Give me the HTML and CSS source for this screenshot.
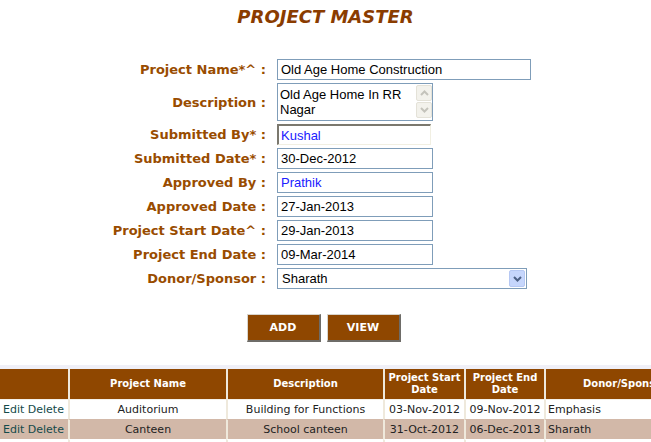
FILE: index.html
```html
<!DOCTYPE html>
<html>
<head>
<meta charset="utf-8">
<title>Project Master</title>
<link rel="stylesheet" href="styles.css">
</head>
<body>
<h1 class="title">PROJECT MASTER</h1>
<div class="form">
  <label class="lbl">Project Name*^ :</label>
  <input class="inp inp-wide" value="Old Age Home Construction">

  <label class="lbl">Description :</label>
  <div class="ta">
    <textarea class="ta-text">Old Age Home In RR Nagar</textarea>
    <div class="sb">
      <div class="sb-btn"><svg width="9" height="6" viewBox="0 0 9 6"><path d="M1 5 L4.5 1.5 L8 5" fill="none" stroke="#c4c3bb" stroke-width="2"/></svg></div>
      <div class="sb-btn"><svg width="9" height="6" viewBox="0 0 9 6"><path d="M1 1 L4.5 4.5 L8 1" fill="none" stroke="#c4c3bb" stroke-width="2"/></svg></div>
    </div>
  </div>

  <label class="lbl">Submitted By* :</label>
  <input class="inp inp-ro blue" value="Kushal" readonly>

  <label class="lbl">Submitted Date* :</label>
  <input class="inp" value="30-Dec-2012">

  <label class="lbl">Approved By :</label>
  <input class="inp blue" value="Prathik">

  <label class="lbl">Approved Date :</label>
  <input class="inp" value="27-Jan-2013">

  <label class="lbl">Project Start Date^ :</label>
  <input class="inp" value="29-Jan-2013">

  <label class="lbl">Project End Date :</label>
  <input class="inp" value="09-Mar-2014">

  <label class="lbl">Donor/Sponsor :</label>
  <div class="sel">
    <span class="sel-text">Sharath</span>
    <span class="sel-btn"><svg width="9" height="6" viewBox="0 0 9 6"><path d="M1 1 L4.5 4.5 L8 1" fill="none" stroke="#4d6185" stroke-width="2"/></svg></span>
  </div>
</div>

<div class="actions">
  <button class="btn">ADD</button>
  <button class="btn">VIEW</button>
</div>

<div class="grid-wrap">
  <table class="grid">
    <colgroup>
      <col class="c1"><col class="c2"><col class="c3"><col class="c4"><col class="c5"><col class="c6"><col class="c7">
    </colgroup>
    <thead>
      <tr>
        <th></th>
        <th>Project Name</th>
        <th>Description</th>
        <th>Project Start Date</th>
        <th>Project End Date</th>
        <th>Donor/Sponsor</th>
        <th>Status</th>
      </tr>
    </thead>
    <tbody>
      <tr>
        <td class="links">Edit Delete</td>
        <td class="ctr">Auditorium</td>
        <td class="ctr">Building for Functions</td>
        <td class="ctr">03-Nov-2012</td>
        <td class="ctr">09-Nov-2012</td>
        <td>Emphasis</td>
        <td></td>
      </tr>
      <tr class="alt">
        <td class="links">Edit Delete</td>
        <td class="ctr">Canteen</td>
        <td class="ctr">School canteen</td>
        <td class="ctr">31-Oct-2012</td>
        <td class="ctr">06-Dec-2013</td>
        <td>Sharath</td>
        <td></td>
      </tr>
      <tr>
        <td>&nbsp;</td><td></td><td></td><td></td><td></td><td></td><td></td>
      </tr>
    </tbody>
  </table>
</div>
</body>
</html>
```

FILE: styles.css
```css
html, body {
  margin: 0;
  padding: 0;
  background: #ffffff;
  overflow: hidden;
}

body {
  font-family: "DejaVu Sans", Verdana, sans-serif;
}

.title {
  margin: 6px 0 0;
  text-align: center;
  font-size: 18px;
  line-height: 22px;
  font-style: italic;
  font-weight: bold;
  color: #8a3c00;
}

.form {
  display: grid;
  grid-template-columns: 266px auto;
  column-gap: 11px;
  row-gap: 3px;
  margin-top: 31px;
  align-items: center;
  justify-items: start;
}

.lbl {
  justify-self: end;
  font-size: 13px;
  font-weight: bold;
  color: #994c00;
  white-space: nowrap;
}

.inp {
  box-sizing: border-box;
  width: 156px;
  height: 21px;
  margin: 0;
  padding: 0 3px;
  border: 1px solid #7f9db9;
  background: #fff;
  font: 13px "Liberation Sans", Arial, sans-serif;
  color: #000;
  outline: none;
}

.inp-wide {
  width: 254px;
}

.inp-ro {
  width: 154px;
  border-style: solid;
  border-width: 2px 1px 1px 2px;
  border-color: #7b786e #f1efe2 #f1efe2 #7b786e;
  padding-left: 2px;
}

.blue {
  color: #2020ff;
}

.ta {
  box-sizing: border-box;
  display: flex;
  width: 156px;
  height: 38px;
  border: 1px solid #7f9db9;
  background: #fff;
}

.ta-text {
  flex: 1;
  min-width: 0;
  margin: 0;
  border: 0;
  padding: 3px 2px 0;
  resize: none;
  overflow: hidden;
  font: 13px/15px "Liberation Sans", Arial, sans-serif;
  color: #000;
  outline: none;
}

.sb {
  display: flex;
  flex-direction: column;
  gap: 1px;
  width: 16px;
  padding: 1px 0;
}

.sb-btn {
  box-sizing: border-box;
  height: 16px;
  border: 1px solid #e4e2d8;
  border-radius: 2px;
  background: #f3f2ec;
  display: flex;
  align-items: center;
  justify-content: center;
}

.sel {
  box-sizing: border-box;
  display: flex;
  align-items: center;
  width: 250px;
  height: 21px;
  border: 1px solid #7f9db9;
  background: #fff;
  padding: 1px;
}

.sel-text {
  flex: 1;
  padding-left: 3px;
  font: 13px "Liberation Sans", Arial, sans-serif;
  color: #000;
}

.sel-btn {
  box-sizing: border-box;
  width: 16px;
  height: 17px;
  border: 1px solid #b6c8f3;
  border-radius: 2px;
  background: #c6d6fc;
  display: flex;
  align-items: center;
  justify-content: center;
}

.actions {
  display: flex;
  justify-content: center;
  gap: 6px;
  margin-top: 25px;
  padding-right: 4px;
}

.btn {
  box-sizing: border-box;
  width: 74px;
  height: 28px;
  margin: 0;
  padding: 0;
  background: #8f4700;
  color: #fff;
  font-family: "DejaVu Sans", Verdana, sans-serif;
  font-size: 11px;
  font-weight: bold;
  border-style: solid;
  border-width: 1px 2px 2px 1px;
  border-color: #d8d4cc #6e6c68 #6e6c68 #d8d4cc;
}

.grid-wrap {
  margin-top: 23px;
  padding-top: 4px;
  background: #f0f0f8;
  overflow: hidden;
}

.grid {
  border-collapse: separate;
  border-spacing: 0;
  table-layout: fixed;
  width: 780px;
  font-size: 11px;
  color: #222;
  background: #fff;
}

.c1 { width: 68px; }
.c2 { width: 158px; }
.c3 { width: 157px; }
.c4 { width: 81px; }
.c5 { width: 80px; }
.c6 { width: 160px; }
.c7 { width: 76px; }

.grid th {
  height: 30px;
  padding: 0 2px;
  background: #8f4700;
  color: #fff;
  font-size: 10px;
  line-height: 12px;
  font-weight: bold;
  text-align: center;
}

.grid th + th,
.grid td + td {
  border-left: 2px solid #efe9dc;
}

.grid td {
  height: 19px;
  padding: 0 2px;
  white-space: nowrap;
  overflow: hidden;
  border-top: 1px solid transparent;
}

.grid tbody tr:first-child td {
  border-top: 1px solid #f4f0e8;
}

.grid .ctr {
  text-align: center;
}

.grid .links {
  padding-left: 3px;
  color: #154a4a;
}

.grid tr.alt td {
  background: #d2b8a8;
}
```
